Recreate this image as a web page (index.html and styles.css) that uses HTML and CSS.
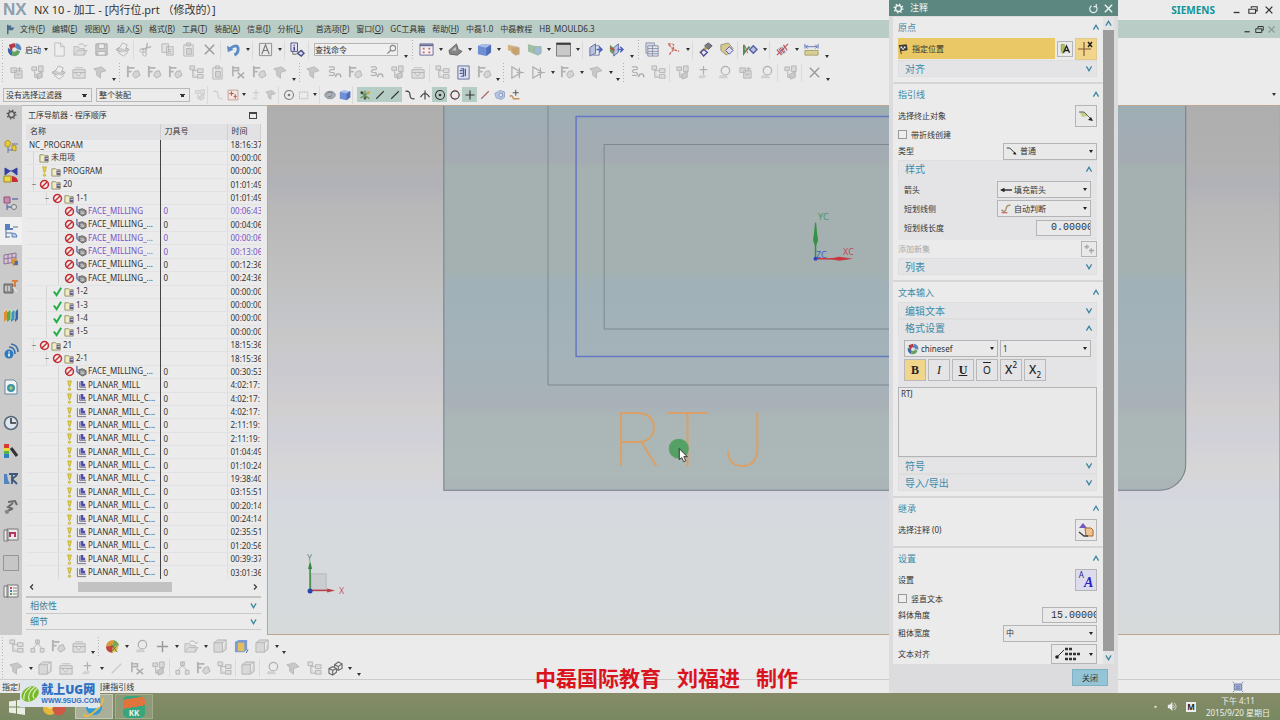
FILE: index.html
```html
<!DOCTYPE html>
<html lang="zh-CN">
<head>
<meta charset="utf-8">
<title>NX 10 - 加工</title>
<link rel="stylesheet" href="styles.css">
</head>
<body>
<svg class="defs" aria-hidden="true">
  <symbol id="up" viewBox="0 0 8 8"><path d="M1 6.500 4 1.500 7 6.500" fill="none" stroke="#3c86a0" stroke-width="1.400"/></symbol>
  <symbol id="down" viewBox="0 0 8 8"><path d="M1 1.500 4 6.500 7 1.500" fill="none" stroke="#3c86a0" stroke-width="1.400"/></symbol>
  <symbol id="gear" viewBox="0 0 16 16"><circle cx="8" cy="8" r="4.300" fill="none" stroke="currentColor" stroke-width="2"/><circle cx="8" cy="8" r="6.300" fill="none" stroke="currentColor" stroke-width="2" stroke-dasharray="2 2.950"/></symbol>
  <symbol id="nx" viewBox="0 0 16 16"><path d="M2 3 8 1l2 6-6 3z" fill="#b03a46"/><path d="M1 6l4 3 1 6Q0 13 1 6z" fill="#3b66a8"/><path d="M9 1q7 1 6 8L9 7z" fill="#5585bc"/><path d="M5 10l5-2 4 2q-2 6-8 5z" fill="#62a363"/><circle cx="8" cy="8" r="2.500" fill="#dfe6e8"/></symbol>
  <symbol id="page" viewBox="0 0 16 16"><path d="M3 1h6l4 4v10H3zM9 1v4h4" fill="#eee" stroke="#bdbdbd"/></symbol>
  <symbol id="open" viewBox="0 0 16 16"><path d="M1 14V5h5l1 2h5v7zM1 14l4-5h10l-3 5M6 3q4-3 7 2l2-2" fill="#ddd" stroke="#bbb"/></symbol>
  <symbol id="save" viewBox="0 0 16 16"><path d="M2 2h12v12H2z" fill="#c9c9c9" stroke="#a8a8a8"/><path d="M5 2h6v5H5zM4 10h8v4H4z" fill="#eee" stroke="#b0b0b0"/></symbol>
  <symbol id="print" viewBox="0 0 16 16"><path d="M1 8l7-4 7 4-6 5z" fill="#ccc" stroke="#aaa"/><path d="M5 6l3-5 5 2-2 5M3 11l6 4 5-4" fill="#eee" stroke="#b5b5b5"/></symbol>
  <symbol id="cut" viewBox="0 0 16 16"><path d="M9 1 7 11M13 5 3 8" stroke="#b3b3b3" stroke-width="1.500"/><circle cx="6" cy="13" r="2" fill="none" stroke="#b3b3b3"/><circle cx="3" cy="9" r="2" fill="none" stroke="#b3b3b3"/></symbol>
  <symbol id="copy" viewBox="0 0 16 16"><path d="M2 2h7v9H2zM7 5h7v9H7z" fill="#e2e2e2" stroke="#b5b5b5"/><path d="M9 8h3M9 10h3M9 12h3" stroke="#b5b5b5"/></symbol>
  <symbol id="paste" viewBox="0 0 16 16"><path d="M3 3h10v12H3z" fill="#e5e5e5" stroke="#b9b9b9"/><path d="M6 1h4v3H6zM6 7h5v6H6z" fill="#d5d5d5" stroke="#b3b3b3"/></symbol>
  <symbol id="x" viewBox="0 0 16 16"><path d="M3 3l10 10M13 3 3 13" stroke="#9a9a9a" stroke-width="1.500"/></symbol>
  <symbol id="undo" viewBox="0 0 16 16"><path d="M4 7Q13 1 13 8q0 4-4 6" fill="none" stroke="#5b8cc6" stroke-width="3"/><path d="M1 4l1 7 6-3z" fill="#5b8cc6"/></symbol>
  <symbol id="boxa" viewBox="0 0 16 16"><path d="M1.500 1.500h13v13h-13z" fill="#e9e9e9" stroke="#8d8d8d"/><path d="M4 13 8 3l4 10M6 9h5" fill="none" stroke="#777" stroke-width="1.200"/></symbol>
  <symbol id="info" viewBox="0 0 16 16"><path d="M1 1h7v9H1z" fill="#e6e6f4" stroke="#4c4c86"/><path d="M4.500 3v1M4.500 5v4" stroke="#3e3e88" stroke-width="1.600"/><path d="M8 12l4-3 3 3-3 3z" fill="#d9d9f0" stroke="#4c4c86" stroke-width="1.500"/><path d="M3 10v3h4" fill="none" stroke="#666"/></symbol>
  <symbol id="view" viewBox="0 0 16 16"><path d="M1 2h14v12H1z" fill="#f3eef0" stroke="#666a94"/><path d="M1 3.500h14" stroke="#666a94" stroke-width="2"/><path d="M4 7h2M10 7h2M4 11h2M10 11h2" stroke="#c46a6a" stroke-width="2"/></symbol>
  <symbol id="shade" viewBox="0 0 16 16"><path d="M1 9 9 2l2 6 4 2-5 4-8-1z" fill="#858585" stroke="#666"/><path d="M4 9l4-4 1 4z" fill="#c5c5c5"/></symbol>
  <symbol id="cube" viewBox="0 0 16 16"><path d="M1 4l5-2 9 1v8l-5 4-9-2z" fill="#6f8fd4"/><path d="M1 4l5-2 9 1-5 3z" fill="#a8bdea"/><path d="M10 6l5-3v8l-5 4z" fill="#4f6eb7"/></symbol>
  <symbol id="lay1" viewBox="0 0 16 16"><path d="M2 3l11 2v6L2 9z" fill="#d6b183"/><path d="M6 6h8v7l-4 1-4-3z" fill="#c9a06c" stroke="#bfae94"/></symbol>
  <symbol id="lay2" viewBox="0 0 16 16"><path d="M1 2l10 3v9L1 10z" fill="#9fc0a5"/><path d="M8 5h7v7l-4 2-3-3z" fill="#a3b9d6" stroke="#91b59e"/></symbol>
  <symbol id="win" viewBox="0 0 16 16"><path d="M.500 1h15v14H.500z" fill="#c9c9c9" stroke="#777"/><path d="M.500 2h15" stroke="#3a3a3a" stroke-width="2"/></symbol>
  <symbol id="door" viewBox="0 0 16 16"><path d="M2 6l6-4v10l-6 3z" fill="#b8c3de" stroke="#5e6ea2"/><path d="M8 4h4v10H5" fill="none" stroke="#6d7cae"/><path d="M9 8h5M12 5l3 3-3 3" fill="none" stroke="#4a5ec0" stroke-width="1.500"/></symbol>
  <symbol id="door2" viewBox="0 0 16 16"><path d="M1 3l4 3-1 7-3-3z" fill="#6a9c62"/><path d="M5 6l5-4v9l-5 4z" fill="#b8c3de" stroke="#5e6ea2"/><path d="M9 8h5M12 5l3 3-3 3" fill="none" stroke="#4a5ec0" stroke-width="1.500"/><path d="M1 6l5 3" stroke="#c04848" stroke-width="1.500"/></symbol>
  <symbol id="stack" viewBox="0 0 16 16"><path d="M1 1h9v11H1z" fill="#d9dce4" stroke="#8a90a6"/><path d="M3 4h11v11H3zM3 7h11M3 10h11M3 12.500h11M8 4v11" fill="#e4e6ee" stroke="#8a90a6"/></symbol>
  <symbol id="axes" viewBox="0 0 16 16"><path d="M3 3l5 5 6 2M8 8l-5 6M2 2h5M8 8V2" fill="none" stroke="#c76a5f" stroke-width="1.400" stroke-dasharray="3 1"/></symbol>
  <symbol id="tool" viewBox="0 0 16 16"><path d="M7 4l4-3 4 3-4 4z" fill="#7b7b8a" stroke="#555"/><path d="M2 12 9 6" stroke="#b4a35c" stroke-width="3"/><path d="M3 11l3-3 4 3-4 4z" fill="#e8e8f7" stroke="#4a4a9c" stroke-width="1.400"/></symbol>
  <symbol id="tool2" viewBox="0 0 16 16"><path d="M2 3l8-2 5 6-7 7-6-5z" fill="#d5c98e" stroke="#9a967f"/><path d="M7 9l4-4 4 4-4 4z" fill="#dadaf2" stroke="#5353a4"/></symbol>
  <symbol id="play" viewBox="0 0 16 16"><path d="M1 3v9l3-4 3-3" fill="none" stroke="#4f8f57" stroke-width="2"/><path d="M2 4l3 8" stroke="#c25757"/><path d="M7 8l4-4 4 4-4 4z" fill="#b9bede" stroke="#5560a4" stroke-width="1.500"/></symbol>
  <symbol id="slash" viewBox="0 0 16 16"><path d="M2 14 14 2M2 8l5 6M5 6l5 6M9 3l4 6" stroke="#c05a5a" stroke-width="1.300"/><path d="M4 7l4 6M7 5l4 6" stroke="#6c6cb5"/></symbol>
  <symbol id="meas" viewBox="0 0 16 16"><path d="M1 9h14v5H1z" fill="#d9cf94" stroke="#a99f6f"/><path d="M1 2v5M15 2v5M2 5h12M4 3 2 5l2 2M12 3l2 2-2 2" fill="none" stroke="#5b73b4"/></symbol>
  <symbol id="op" viewBox="0 0 16 16"><path d="M2 3h6v5H2zM6 6h8v8H6z" fill="#d6d6d6" stroke="#b8b8b8"/><path d="M11 2v5M9 4h5M8 10h4" stroke="#b0b0b0"/></symbol>
  <symbol id="op2" viewBox="0 0 16 16"><path d="M2 2h5v4H2zM9 1h5v6H9zM5 7v6h4" fill="#d8d8d8" stroke="#b4b4b4"/><path d="M7 10l6-3v6l-5 2z" fill="#cacaca" stroke="#b2b2b2"/></symbol>
  <symbol id="op3" viewBox="0 0 16 16"><path d="M2 1v12M2 3h7M2 7h4" stroke="#b2b2b2" stroke-width="2"/><path d="M9 7l4-1 2 5-5 3-3-3z" fill="#d5d5d5" stroke="#b2b2b2"/></symbol>
  <symbol id="op4" viewBox="0 0 16 16"><path d="M1 5h13v9H1zM1 8h13M4 8l3 4 3-4" fill="#ddd" stroke="#b4b4b4"/><path d="M3 3h9" stroke="#bbb"/></symbol>
  <symbol id="op5" viewBox="0 0 16 16"><path d="M1 4l8-2 5 4-6 2v6l-4-3V7z" fill="#c8c8c8" stroke="#b8b8b8"/></symbol>
  <symbol id="op6" viewBox="0 0 16 16"><path d="M2 1v11M2 3h6v3H2" fill="none" stroke="#b2b2b2" stroke-width="1.700"/><path d="M7 8l7 6M14 8l-7 6" stroke="#aaa" stroke-width="1.600"/></symbol>
  <symbol id="op7" viewBox="0 0 16 16"><path d="M2 2h5q2 2 0 3H4q-3 2 0 3h3q2 2 0 3H2" fill="none" stroke="#b2b2b2" stroke-width="1.300"/><path d="M9 13q1-5 5-3l1 3" fill="none" stroke="#aaa" stroke-width="1.500"/></symbol>
  <symbol id="op8" viewBox="0 0 16 16"><path d="M2 2l10 6-10 6zM10 3v11M7 8h8" fill="none" stroke="#b0b0b0" stroke-width="1.300"/></symbol>
  <symbol id="op9" viewBox="0 0 16 16"><path d="M8 1v9M4 5h8" stroke="#b0b0b0" stroke-width="1.300"/><path d="M4 11h7l-2 3H2z" fill="#d2d2d2"/></symbol>
  <symbol id="op10" viewBox="0 0 16 16"><circle cx="9" cy="6" r="4.500" fill="none" stroke="#b0b0b0" stroke-width="1.300"/><path d="M3 11h7l2 3H2z" fill="#d0d0d0"/></symbol>
  <symbol id="doc" viewBox="0 0 16 16"><path d="M2 1h12v14H2z" fill="#dde2f0" stroke="#5e6da0"/><path d="M5 4h3v8H5M10 4v8M4 6h3M4 9h3" fill="none" stroke="#4c5c98" stroke-width="1.300"/></symbol>
  <symbol id="plus" viewBox="0 0 16 16"><path d="M8 2v12M2 8h12" stroke="currentColor" stroke-width="1.500"/></symbol>
  <symbol id="line" viewBox="0 0 16 16"><path d="M3 13 13 3" stroke="currentColor" stroke-width="1.500"/></symbol>
  <symbol id="snap" viewBox="0 0 16 16"><path d="M2 4l12 9M14 4 2 12M8 2v12" stroke="#5d914c" stroke-width="1.500"/><circle cx="4" cy="5" r="2" fill="#444"/><circle cx="12" cy="5" r="2" fill="#c9a635"/><circle cx="8" cy="12" r="2" fill="#555"/></symbol>
  <symbol id="curve" viewBox="0 0 16 16"><path d="M2 3q6-1 6 5t6 5" fill="none" stroke="currentColor" stroke-width="1.500"/></symbol>
  <symbol id="join" viewBox="0 0 16 16"><path d="M2 11q6-10 12 0M8 2v12" fill="none" stroke="currentColor" stroke-width="1.400"/></symbol>
  <symbol id="cen" viewBox="0 0 16 16"><circle cx="8" cy="8" r="6" fill="none" stroke="#333" stroke-width="1.400"/><circle cx="8" cy="8" r="1.800" fill="#333"/></symbol>
  <symbol id="circ" viewBox="0 0 16 16"><circle cx="8" cy="8" r="5.500" fill="none" stroke="currentColor" stroke-width="1.400"/><path d="M8 1v3M8 12v3M1 8h3M12 8h3" stroke="#c56a6a" stroke-width="1.600"/></symbol>
  <symbol id="rect" viewBox="0 0 16 16"><path d="M2 4h11v9H2z" fill="none" stroke="#aaa" stroke-dasharray="2 1"/></symbol>
  <symbol id="disc" viewBox="0 0 16 16"><ellipse cx="8" cy="8" rx="7" ry="5" fill="#aab0b9" stroke="#7f8388"/><path d="M3 7q4-5 9-1M5 10q3 2 6-2" fill="none" stroke="#686d75"/></symbol>
  <symbol id="redb" viewBox="0 0 16 16"><path d="M1.500 1.500h13v13h-13z" fill="#f1e7e3" stroke="#b98c80"/><path d="M6 3v6M3 6h6M11 7v6M9 10h4" stroke="#cf5a48" stroke-width="1.500"/></symbol>
  <symbol id="part" viewBox="0 0 16 16"><path d="M1 6l7-4 6 2v7l-4 3-7-2z" fill="#b8c6e4" stroke="#8797bd"/><circle cx="9" cy="8" r="2.500" fill="#e3e8f3" stroke="#7487b3"/></symbol>
  <symbol id="pt" viewBox="0 0 16 16"><path d="M9 1v8M5 5h8" stroke="#555" stroke-width="1.300"/><path d="M1 10q3-3 5 3h8" fill="none" stroke="#c99058" stroke-width="2"/></symbol>
  <symbol id="wcube" viewBox="0 0 16 16"><path d="M1 4h9v10H1zM1 4l4-3h9l-4 3M14 1v10l-4 3" fill="#d8d8d8" stroke="#b5b5b5"/></symbol>
  <symbol id="tree1" viewBox="0 0 16 16"><path d="M1 1h5v4H1zM9 4h6v4H9zM9 10h6v4H9zM4 5v8h5M4 6h5" fill="#ddd" stroke="#b5b5b5"/></symbol>
  <symbol id="tree2" viewBox="0 0 16 16"><path d="M8 1v4M8 5l-5 5M8 5l5 5M1 10h4v4H1zM11 10h4v4h-4zM6 1h4v4H6z" fill="#ddd" stroke="#b5b5b5"/></symbol>
  <symbol id="color" viewBox="0 0 16 16"><path d="M1 8Q2 1 9 1l-1 7z" fill="#d79a3d"/><path d="M1 8q0 6 7 7l1-8z" fill="#c1443e"/><path d="M9 1q5 1 6 6l-7 2z" fill="#76a858"/><path d="M8 9l6-2q1 6-6 8z" fill="#e0c24c"/><path d="M7 6l6 8M12 8l-5 5" stroke="#4f7040"/></symbol>
  <symbol id="ybox" viewBox="0 0 16 16"><path d="M1 3l4-2h9v10l-3 3H1z" fill="#7d9bd2"/><path d="M4 4h7v9H4z" fill="#e2bf5c"/><path d="M13 15l2-4" stroke="#47639d"/></symbol>
  <symbol id="dcube" viewBox="0 0 16 16"><path d="M1 8l4-2 4 2v4l-4 3-4-2zM1 8l4 2 4-2M5 10v5M7 4l4-3 4 2v5l-4 2-4-3zM7 4l4 2 4-3M11 6v4" fill="none" stroke="#6d6d6d" stroke-width="1.200"/></symbol>
  <symbol id="lens" viewBox="0 0 16 16"><circle cx="10" cy="6" r="4" fill="none" stroke="#888" stroke-width="1.500"/><path d="M7 9l-5 5" stroke="#888" stroke-width="2"/></symbol>
  <symbol id="no" viewBox="0 0 12 12"><circle cx="6" cy="6" r="4.300" fill="#f7eded" stroke="#c22d33" stroke-width="1.700"/><path d="M3.200 8.800 8.800 3.200" stroke="#c22d33" stroke-width="1.600"/></symbol>
  <symbol id="ok" viewBox="0 0 12 12"><path d="M2 6l3 4L10 2" fill="none" stroke="#24ae47" stroke-width="2.200"/></symbol>
  <symbol id="ex" viewBox="0 0 12 12"><path d="M4 1h4l-1.500 6h-1z" fill="#ecd83c" stroke="#b5a22c" stroke-width=".800"/><circle cx="6" cy="10" r="1.300" fill="#ecd83c" stroke="#b5a22c" stroke-width=".700"/></symbol>
  <symbol id="fold" viewBox="0 0 12 12"><path d="M1 3h4l1 1h4v7H1z" fill="#f1edc0" stroke="#918d68"/><path d="M6 5h4v5H6z" fill="#66618c"/><path d="M7 7h3" stroke="#d4cfe8"/></symbol>
  <symbol id="face" viewBox="0 0 12 12"><path d="M1 0v6l3 3" fill="none" stroke="#6670a5" stroke-width="1.500"/><path d="M3 4l4-1 4 2v4l-4 2-3-2z" fill="#8d8d8d" stroke="#5e5e5e"/><path d="M5 6l4 1M5 8h4" stroke="#d3d3d3"/></symbol>
  <symbol id="plan" viewBox="0 0 12 12"><path d="M1.500 1v9.500H11M4 2v6h7" fill="none" stroke="#6f6f80"/><path d="M5 1h3v3h2v3H5z" fill="#5350a8"/></symbol>
  <symbol id="r1" viewBox="0 0 16 16"><path d="M2 3l3-2 3 3-2 4-4-1zM9 6l4 1v5l-4-1z" fill="#e9c93c" stroke="#b19626"/><path d="M5 8v6M5 11h5M9 5h6" stroke="#6076a8"/></symbol>
  <symbol id="r2" viewBox="0 0 16 16"><path d="M2 1v7l5-4zM14 1v7L9 4zM7 4h2" fill="#3441a3" stroke="#3441a3"/><path d="M1 9h7v6H1z" fill="#ecd84b" stroke="#9b8b24"/><path d="M9 9q6 1 6 6H9z" fill="#c72f35"/></symbol>
  <symbol id="r3" viewBox="0 0 16 16"><path d="M1 2h6v6H1z" fill="#c88aab" stroke="#90527a"/><path d="M9 4h6M4 9v6M4 12h4" stroke="#6576a5" stroke-width="1.300"/><circle cx="11" cy="12" r="2.500" fill="#ddd" stroke="#777"/></symbol>
  <symbol id="r4" viewBox="0 0 16 16"><path d="M2 1h5v4h3v2H2z" fill="#5682c2"/><path d="M3 7v8M3 10h6M3 14h4M10 4h5" stroke="#56749f"/><path d="M9 10l4 1 1 3H9z" fill="#b8cde9" stroke="#5d86bf"/></symbol>
  <symbol id="r5" viewBox="0 0 16 16"><path d="M1 4l12-2v9L1 13zM1 8l12-2M5 3v9M9 3v9" fill="#d7c5cf" stroke="#8d719e"/><path d="M8 9l4-2 3 3v4l-5 1z" fill="#d99438"/><path d="M12 10h3v4h-4z" fill="#4770b6"/></symbol>
  <symbol id="r6" viewBox="0 0 16 16"><path d="M1 5h9v9H1z" fill="#8e8e8e" stroke="#666"/><path d="M3 7v5M6 7v5M10 8l4 5" stroke="#e4e4e4" stroke-width="1.300"/><path d="M9 2h6M12 2v6" stroke="#dd8142" stroke-width="2"/></symbol>
  <symbol id="r7" viewBox="0 0 16 16"><path d="M1 5l3-3v10l-3 3z" fill="#dc9232"/><path d="M4 5l4-3v10l-4 3z" fill="#58a94e"/><path d="M8 5l4-3v10l-4 3z" fill="#4292c2"/><path d="M12 5l3-3v10l-3 3z" fill="#3665aa"/><path d="M1 5l3-3M4 5l4-3v10M8 5l4-3v10" fill="none" stroke="#e6e6dc" stroke-width=".800"/></symbol>
  <symbol id="r8" viewBox="0 0 16 16"><circle cx="6" cy="11" r="4.500" fill="#2d7ac0"/><path d="M6 8.500v1M6 10.500v3" stroke="#fff" stroke-width="1.600"/><path d="M6 4q6 0 6 7M8 1q7 1 7 8" fill="none" stroke="#3a6fa9" stroke-width="1.500"/></symbol>
  <symbol id="r9" viewBox="0 0 16 16"><path d="M2 1h9l3 3v11H2z" fill="#f4f4f4" stroke="#6689a1"/><circle cx="8" cy="9" r="4" fill="#3f94a7"/><circle cx="8" cy="9" r="1.700" fill="#a7d56c"/></symbol>
  <symbol id="r10" viewBox="0 0 16 16"><circle cx="8" cy="8" r="6.500" fill="#dce6f0" stroke="#5b6877" stroke-width="1.600"/><path d="M8 3v5h5" fill="none" stroke="#333" stroke-width="1.500"/></symbol>
  <symbol id="r11" viewBox="0 0 16 16"><path d="M1 1h5v4H1z" fill="#d73b2f"/><path d="M1 5h5v3H1z" fill="#ecd93a"/><path d="M1 8h5v3H1z" fill="#54b34a"/><path d="M1 11h5v4H1z" fill="#337fc4"/><path d="M8 5l6 8" stroke="#333" stroke-width="3"/></symbol>
  <symbol id="r12" viewBox="0 0 16 16"><path d="M1 3h3l1 6 2 4H1z" fill="#4f86c2"/><path d="M6 3h9M9 3v10M14 4l-5 4 5 5" fill="none" stroke="#3e587a" stroke-width="1.800"/></symbol>
  <symbol id="r13" viewBox="0 0 16 16"><path d="M5 3l7-1 2 4M10 4 5 8l5 2M2 13l7-3" fill="none" stroke="#6c6c6c" stroke-width="2"/><circle cx="4" cy="13" r="2" fill="#888"/></symbol>
  <symbol id="r14" viewBox="0 0 16 16"><path d="M1 3h4v11H1zM4 2h11v11H4z" fill="#ecebec" stroke="#777"/><path d="M6 10V5h7v5h-2V7H8v3z" fill="#b7365b"/></symbol>
  <symbol id="r15" viewBox="0 0 16 16"><path d="M.500 .500h15v15H.500z" fill="#c6c6c6" stroke="#969696"/></symbol>
  <symbol id="r16" viewBox="0 0 16 16"><path d="M1 3h4v11H1zM4 2h11v12H4z" fill="#eee" stroke="#777"/><path d="M7 5h2" stroke="#c24f4f" stroke-width="2"/><path d="M7 8h2" stroke="#4a76b9" stroke-width="2"/><path d="M7 11h2" stroke="#58a94e" stroke-width="2"/><path d="M10 5h4M10 8h4M10 11h4" stroke="#888"/></symbol>
  <symbol id="mini" viewBox="0 0 12 12"><path d="M2 9h7" stroke="currentColor" stroke-width="1.600"/></symbol>
  <symbol id="rest" viewBox="0 0 12 12"><path d="M4 4V2h7v5H9M1 5h8v5H1z" fill="none" stroke="currentColor" stroke-width="1.300"/></symbol>
  <symbol id="close" viewBox="0 0 12 12"><path d="M2 2l8 8M10 2l-8 8" stroke="currentColor" stroke-width="1.500"/></symbol>
  <symbol id="lead" viewBox="0 0 16 16"><path d="M1 4h4l7 7" fill="none" stroke="#333" stroke-width="1.300"/><path d="M14 13l-5-1 3-3z" fill="#222"/></symbol>
</svg>

<header class="titlebar">
  <span class="nxlogo">NX</span>
  <h1>NX 10 - 加工 - [内行位.prt （修改的）]</h1>
  <span class="siemens">SIEMENS</span>
  <div class="winbtns">
    <button aria-label="最小化"><svg><use href="#mini"/></svg></button><button aria-label="还原"><svg><use href="#rest"/></svg></button><button aria-label="关闭"><svg><use href="#close"/></svg></button>
  </div>
</header>

<nav class="menubar">
  <svg class="menuicon" viewBox="0 0 16 16"><path d="M4 1v14" stroke="#4a5f78" stroke-width="2"/><path d="M4 2h5v3h5l-3 4H4z" fill="#4e6d92"/></svg>
  <button>文件(<u>F</u>)</button><button>编辑(<u>E</u>)</button><button>视图(<u>V</u>)</button><button>插入(<u>S</u>)</button><button>格式(<u>R</u>)</button><button>工具(<u>T</u>)</button><button>装配(<u>A</u>)</button><button>信息(<u>I</u>)</button><button>分析(<u>L</u>)</button><button class="wide">首选项(<u>P</u>)</button><button>窗口(<u>O</u>)</button><button>GC工具箱</button><button>帮助(<u>H</u>)</button><button>中磊1.0</button><button>中磊教程</button><button>HB_MOULD6.3</button>
  <div class="winbtns docbtns">
    <button aria-label="最小化文档"><svg><use href="#mini"/></svg></button><button aria-label="还原文档"><svg><use href="#rest"/></svg></button><button class="dim" aria-label="关闭文档"><svg><use href="#close"/></svg></button>
  </div>
</nav>

<div class="toolbar">
  <i class="grip"></i>
  <button class="launch"><svg><use href="#nx"/></svg>启动<i class="caret"></i></button>
  <button class="b"><svg><use href="#page"/></svg></button><button class="b"><svg><use href="#open"/></svg></button><button class="b"><svg><use href="#save"/></svg></button><button class="b"><svg><use href="#print"/></svg></button><i class="sep"></i>
  <button class="b"><svg><use href="#cut"/></svg></button><button class="b"><svg><use href="#copy"/></svg></button><button class="b"><svg><use href="#paste"/></svg></button><button class="b"><svg><use href="#x"/></svg></button><i class="sep"></i>
  <button class="b"><svg><use href="#undo"/></svg></button><i class="dd"></i><i class="sep"></i>
  <button class="b"><svg><use href="#boxa"/></svg></button><i class="dd"></i><i class="sep"></i>
  <button class="b"><svg><use href="#info"/></svg></button><i class="sep"></i>
  <label class="search"><input type="text" value="查找命令" aria-label="查找命令"><svg><use href="#lens"/></svg></label><i class="dd end"></i>
  <i class="grip"></i>
  <button class="b"><svg><use href="#view"/></svg></button><i class="dd"></i><button class="b"><svg><use href="#shade"/></svg></button><i class="dd"></i><button class="b"><svg><use href="#cube"/></svg></button><i class="dd"></i><button class="b"><svg><use href="#lay1"/></svg></button><button class="b"><svg><use href="#lay2"/></svg></button><i class="dd"></i><button class="b"><svg><use href="#win"/></svg></button><i class="dd"></i><i class="sep"></i>
  <button class="b"><svg><use href="#door"/></svg></button><button class="b"><svg><use href="#door2"/></svg></button><i class="dd end"></i>
  <i class="grip"></i>
  <button class="b"><svg><use href="#stack"/></svg></button><button class="b"><svg><use href="#axes"/></svg></button><i class="dd"></i><i class="sep"></i>
  <button class="b"><svg><use href="#tool"/></svg></button><button class="b"><svg><use href="#tool2"/></svg></button><i class="sep"></i>
  <button class="b"><svg><use href="#play"/></svg></button><i class="dd"></i><i class="sep"></i>
  <button class="b"><svg><use href="#slash"/></svg></button><i class="dd"></i><button class="b"><svg><use href="#meas"/></svg></button><i class="dd end"></i>
</div>

<div class="toolbar tight">
  <i class="grip"></i>
  <button class="b"><svg><use href="#op"/></svg></button><button class="b"><svg><use href="#op2"/></svg></button><button class="b"><svg><use href="#print"/></svg></button><button class="b"><svg><use href="#op4"/></svg></button><button class="b"><svg><use href="#op5"/></svg></button><i class="dd end"></i>
  <i class="grip"></i>
  <button class="b"><svg><use href="#op3"/></svg></button><button class="b"><svg><use href="#op3"/></svg></button><button class="b"><svg><use href="#op3"/></svg></button><button class="b"><svg><use href="#tree1"/></svg></button><button class="b"><svg><use href="#paste"/></svg></button><button class="b"><svg><use href="#op6"/></svg></button><button class="b"><svg><use href="#op3"/></svg></button><button class="b"><svg><use href="#op5"/></svg></button><i class="dd end"></i>
  <i class="grip"></i>
  <button class="b"><svg><use href="#op5"/></svg></button><button class="b"><svg><use href="#op7"/></svg></button><button class="b"><svg><use href="#op3"/></svg></button><button class="b"><svg><use href="#op7"/></svg></button><button class="b"><svg><use href="#op2"/></svg></button><button class="b"><svg><use href="#op4"/></svg></button><i class="sep"></i>
  <button class="b"><svg><use href="#tree1"/></svg></button><button class="b"><svg><use href="#doc"/></svg></button><button class="b"><svg><use href="#op3"/></svg></button><i class="dd end"></i>
  <i class="grip"></i>
  <button class="b"><svg><use href="#op8"/></svg></button><button class="b"><svg><use href="#op8"/></svg></button><i class="dd"></i><button class="b"><svg><use href="#op3"/></svg></button><i class="dd"></i><button class="b"><svg><use href="#op5"/></svg></button><i class="dd"></i><i class="dd end"></i>
  <i class="grip"></i>
  <button class="b"><svg><use href="#op7"/></svg></button><button class="b"><svg><use href="#tree1"/></svg></button><i class="sep"></i>
  <button class="b"><svg><use href="#op2"/></svg></button><button class="b"><svg><use href="#op9"/></svg></button><button class="b"><svg><use href="#op10"/></svg></button><button class="b"><svg><use href="#op"/></svg></button><button class="b"><svg><use href="#op10"/></svg></button><i class="sep"></i>
  <button class="b"><svg><use href="#op2"/></svg></button><i class="sep"></i><button class="b"><svg><use href="#x"/></svg></button><i class="dd end"></i>
</div>

<div class="toolbar filters">
  <select class="filter" aria-label="选择过滤器"><option>没有选择过滤器</option></select>
  <select class="filter scope" aria-label="选择范围"><option>整个装配</option></select>
  <button class="n gray"><svg><use href="#op2"/></svg></button><i class="sep"></i><button class="n gray"><svg><use href="#curve"/></svg></button><button class="n"><svg><use href="#redb"/></svg></button><i class="dd"></i><button class="n gray"><svg><use href="#op9"/></svg></button><button class="n"><svg><use href="#op5"/></svg></button><i class="sep"></i>
  <button class="n"><svg class="gray"><use href="#cen"/></svg></button><button class="n"><svg><use href="#rect"/></svg></button><i class="dd"></i><i class="sep"></i>
  <button class="n"><svg><use href="#disc"/></svg></button><button class="n"><svg><use href="#cube"/></svg></button><i class="sep snaps"></i>
  <button class="n on"><svg><use href="#snap"/></svg></button><button class="n on"><svg><use href="#line"/></svg></button><button class="n on"><svg><use href="#line"/></svg></button><button class="n"><svg><use href="#curve"/></svg></button><button class="n"><svg><use href="#join"/></svg></button><button class="n on"><svg><use href="#cen"/></svg></button><button class="n"><svg><use href="#circ"/></svg></button><button class="n on"><svg><use href="#plus"/></svg></button><button class="n red"><svg><use href="#line"/></svg></button><button class="n"><svg><use href="#part"/></svg></button><button class="n"><svg><use href="#pt"/></svg></button>
  <i class="dd more"></i>
</div>

<main>
  <aside class="rail">
    <button class="cog"><svg><use href="#gear"/></svg></button>
    <button><svg><use href="#r1"/></svg></button><button><svg><use href="#r2"/></svg></button><button><svg><use href="#r3"/></svg></button><button class="sel"><svg><use href="#r4"/></svg></button><button><svg><use href="#r5"/></svg></button><button><svg><use href="#r6"/></svg></button><button><svg><use href="#r7"/></svg></button><button class="gap"><svg><use href="#r8"/></svg></button><button class="gap"><svg><use href="#r9"/></svg></button><button class="gap"><svg><use href="#r10"/></svg></button><button><svg><use href="#r11"/></svg></button><button><svg><use href="#r12"/></svg></button><button><svg><use href="#r13"/></svg></button><button><svg><use href="#r14"/></svg></button><button><svg><use href="#r15"/></svg></button><button><svg><use href="#r16"/></svg></button>
  </aside>

  <section class="navigator">
    <div class="navtitle"><h2>工序导航器 - 程序顺序</h2><button class="maxi" aria-label="最大化"></button></div>
    <div class="treewrap">
    <table class="tree">
      <thead><tr><th class="c1">名称</th><th class="c2">刀具号</th><th class="c3">时间</th></tr></thead>
      <tbody>
      <tr><td class="l0">NC_PROGRAM</td><td></td><td>18:16:37</td></tr>
      <tr><td class="l1"><i></i><svg><use href="#fold"/></svg>未用项</td><td></td><td>00:00:00</td></tr>
      <tr><td class="l1"><i></i><svg><use href="#ex"/></svg><svg><use href="#fold"/></svg>PROGRAM</td><td></td><td>00:00:00</td></tr>
      <tr><td class="l1"><i>−</i><svg><use href="#no"/></svg><svg><use href="#fold"/></svg>20</td><td></td><td>01:01:49</td></tr>
      <tr><td class="l2"><i>−</i><svg><use href="#no"/></svg><svg><use href="#fold"/></svg>1-1</td><td></td><td>01:01:49</td></tr>
      <tr class="hot"><td class="l3"><i></i><svg><use href="#no"/></svg><svg><use href="#face"/></svg>FACE_MILLING</td><td>0</td><td>00:06:43</td></tr>
      <tr><td class="l3"><i></i><svg><use href="#no"/></svg><svg><use href="#face"/></svg>FACE_MILLING_...</td><td>0</td><td>00:04:06</td></tr>
      <tr class="hot"><td class="l3"><i></i><svg><use href="#no"/></svg><svg><use href="#face"/></svg>FACE_MILLING_...</td><td>0</td><td>00:00:06</td></tr>
      <tr class="hot"><td class="l3"><i></i><svg><use href="#no"/></svg><svg><use href="#face"/></svg>FACE_MILLING_...</td><td>0</td><td>00:13:06</td></tr>
      <tr><td class="l3"><i></i><svg><use href="#no"/></svg><svg><use href="#face"/></svg>FACE_MILLING_...</td><td>0</td><td>00:12:36</td></tr>
      <tr><td class="l3"><i></i><svg><use href="#no"/></svg><svg><use href="#face"/></svg>FACE_MILLING_...</td><td>0</td><td>00:24:36</td></tr>
      <tr><td class="l2"><i></i><svg><use href="#ok"/></svg><svg><use href="#fold"/></svg>1-2</td><td></td><td>00:00:00</td></tr>
      <tr><td class="l2"><i></i><svg><use href="#ok"/></svg><svg><use href="#fold"/></svg>1-3</td><td></td><td>00:00:00</td></tr>
      <tr><td class="l2"><i></i><svg><use href="#ok"/></svg><svg><use href="#fold"/></svg>1-4</td><td></td><td>00:00:00</td></tr>
      <tr><td class="l2"><i></i><svg><use href="#ok"/></svg><svg><use href="#fold"/></svg>1-5</td><td></td><td>00:00:00</td></tr>
      <tr><td class="l1"><i>−</i><svg><use href="#no"/></svg><svg><use href="#fold"/></svg>21</td><td></td><td>18:15:36</td></tr>
      <tr><td class="l2"><i>−</i><svg><use href="#no"/></svg><svg><use href="#fold"/></svg>2-1</td><td></td><td>18:15:36</td></tr>
      <tr><td class="l3"><i></i><svg><use href="#no"/></svg><svg><use href="#face"/></svg>FACE_MILLING_...</td><td>0</td><td>00:30:53</td></tr>
      <tr><td class="l3"><i></i><svg><use href="#ex"/></svg><svg><use href="#plan"/></svg>PLANAR_MILL</td><td>0</td><td>4:02:17:</td></tr>
      <tr><td class="l3"><i></i><svg><use href="#ex"/></svg><svg><use href="#plan"/></svg>PLANAR_MILL_C...</td><td>0</td><td>4:02:17:</td></tr>
      <tr><td class="l3"><i></i><svg><use href="#ex"/></svg><svg><use href="#plan"/></svg>PLANAR_MILL_C...</td><td>0</td><td>4:02:17:</td></tr>
      <tr><td class="l3"><i></i><svg><use href="#ex"/></svg><svg><use href="#plan"/></svg>PLANAR_MILL_C...</td><td>0</td><td>2:11:19:</td></tr>
      <tr><td class="l3"><i></i><svg><use href="#ex"/></svg><svg><use href="#plan"/></svg>PLANAR_MILL_C...</td><td>0</td><td>2:11:19:</td></tr>
      <tr><td class="l3"><i></i><svg><use href="#ex"/></svg><svg><use href="#plan"/></svg>PLANAR_MILL_C...</td><td>0</td><td>01:04:49</td></tr>
      <tr><td class="l3"><i></i><svg><use href="#ex"/></svg><svg><use href="#plan"/></svg>PLANAR_MILL_C...</td><td>0</td><td>01:10:24</td></tr>
      <tr><td class="l3"><i></i><svg><use href="#ex"/></svg><svg><use href="#plan"/></svg>PLANAR_MILL_C...</td><td>0</td><td>19:38:40</td></tr>
      <tr><td class="l3"><i></i><svg><use href="#ex"/></svg><svg><use href="#plan"/></svg>PLANAR_MILL_C...</td><td>0</td><td>03:15:51</td></tr>
      <tr><td class="l3"><i></i><svg><use href="#ex"/></svg><svg><use href="#plan"/></svg>PLANAR_MILL_C...</td><td>0</td><td>00:20:14</td></tr>
      <tr><td class="l3"><i></i><svg><use href="#ex"/></svg><svg><use href="#plan"/></svg>PLANAR_MILL_C...</td><td>0</td><td>00:24:14</td></tr>
      <tr><td class="l3"><i></i><svg><use href="#ex"/></svg><svg><use href="#plan"/></svg>PLANAR_MILL_C...</td><td>0</td><td>02:35:51</td></tr>
      <tr><td class="l3"><i></i><svg><use href="#ex"/></svg><svg><use href="#plan"/></svg>PLANAR_MILL_C...</td><td>0</td><td>01:20:56</td></tr>
      <tr><td class="l3"><i></i><svg><use href="#ex"/></svg><svg><use href="#plan"/></svg>PLANAR_MILL_C...</td><td>0</td><td>00:39:37</td></tr>
      <tr><td class="l3"><i></i><svg><use href="#ex"/></svg><svg><use href="#plan"/></svg>PLANAR_MILL_C...</td><td>0</td><td>03:01:36</td></tr>
      </tbody>
    </table>
    </div>
    <div class="hscroll">
      <svg viewBox="0 0 8 8"><path d="M5 1.500 2.500 4 5 6.500" fill="none" stroke="#333" stroke-width="1.200"/></svg>
      <span class="track"><span class="thumb"></span></span>
      <svg viewBox="0 0 8 8"><path d="M3 1.500 5.500 4 3 6.500" fill="none" stroke="#333" stroke-width="1.200"/></svg>
    </div>
    <button class="fold">相依性<svg><use href="#down"/></svg></button>
    <button class="fold">细节<svg><use href="#down"/></svg></button>
  </section>

  <section class="viewport">
    <svg class="scene" viewBox="1 1 1011 527" preserveAspectRatio="xMinYMin slice">
      <defs>
        <linearGradient id="bg" x1="0" y1="0" x2="0" y2="1">
          <stop offset="0" stop-color="#aeaeae"/><stop offset=".11" stop-color="#b2b1b2"/><stop offset=".15" stop-color="#b1b2b8"/><stop offset=".2" stop-color="#b9b8b8"/><stop offset=".33" stop-color="#c1c1c1"/><stop offset=".4" stop-color="#c3c5c9"/><stop offset=".44" stop-color="#c9c8c8"/><stop offset=".5" stop-color="#cac9d0"/><stop offset=".57" stop-color="#d1cfcf"/><stop offset=".62" stop-color="#d0d1d9"/><stop offset=".68" stop-color="#d7d6d6"/><stop offset=".73" stop-color="#d5d6df"/><stop offset=".76" stop-color="#d6dade"/><stop offset="1" stop-color="#d7dadb"/>
        </linearGradient>
        <linearGradient id="solid" x1="0" y1="0" x2="0" y2="1">
          <stop offset="0" stop-color="#9cafb3"/><stop offset=".07" stop-color="#a2acb4"/><stop offset=".14" stop-color="#a4abb2"/><stop offset=".17" stop-color="#a4b1b0"/><stop offset=".43" stop-color="#a4b1b0"/><stop offset=".47" stop-color="#a0b1b8"/><stop offset=".7" stop-color="#a5b3b9"/><stop offset=".77" stop-color="#a9b0b8"/><stop offset=".82" stop-color="#abb7b7"/><stop offset=".96" stop-color="#acb7b7"/><stop offset="1" stop-color="#aab3b8"/>
        </linearGradient>
      </defs>
      <rect width="1014" height="530" fill="url(#bg)"/>
      <path d="M176.500 -2V384.500H891a26 26 0 0 0 26-26V-2z" fill="url(#solid)" stroke="#747f84"/>
      <path d="M280.500 0V279.500H700M700 39.500H336.500V223.500H700" fill="none" stroke="#7c8a90"/>
      <path d="M700 11.500H308.500V251H700" fill="none" stroke="#6478c4" stroke-width="1.500"/>
      <path d="M547.500 153V118" stroke="#379047" stroke-width="1.500"/><path d="M545 135l2.500-19 2.500 19-2.500 7z" fill="#379047"/>
      <path d="M548 153.500h30" stroke="#c9383e" stroke-width="1.500"/><path d="M561 153.500l10-2 14 2-14 2z" fill="#c9383e"/>
      <circle cx="547.500" cy="153.500" r="2" fill="#2746c2"/>
      <text class="axis" x="550" y="115" fill="#4b9460">YC</text><text class="axis" x="548" y="153" fill="#3f5cc4">ZC</text><text class="axis" x="575" y="150" fill="#c14c5c">XC</text>
      <text class="cad" x="345" y="360">R</text><text class="cad" x="397" y="360">T</text><text class="cad" x="456" y="360">J</text>
      <circle cx="411" cy="343" r="10" fill="#55a065"/>
      <path d="M411.500 343v11l2.500-2 2 4 2-1-2-4h3.500z" fill="#fff" stroke="#222" stroke-width=".900"/>
      <rect x="44" y="468" width="15" height="16" fill="#cccdd0" stroke="#b7b9bc"/>
      <path d="M43 484v-22" stroke="#37843c" stroke-width="1.500"/><path d="M41 463l2-8 2 8z" fill="#37843c"/>
      <path d="M43 484.500h18" stroke="#bb3f42" stroke-width="1.500"/><path d="M60 482.500l8 2-8 2z" fill="#bb3f42"/><circle cx="43" cy="485" r="2.500" fill="#2845ad"/>
      <text class="axis" x="40" y="455" fill="#788">Y</text><text class="axis" x="72" y="488" fill="#c45f6b">X</text>
    </svg>
  </section>
</main>

<footer class="bottom">
  <div class="toolbar tight">
    <i class="grip"></i>
    <button class="b"><svg><use href="#tree1"/></svg></button><button class="b"><svg><use href="#tree2"/></svg></button><button class="b"><svg><use href="#op3"/></svg></button><button class="b"><svg><use href="#op4"/></svg></button><i class="dd end"></i>
    <i class="grip"></i>
    <button class="b"><svg><use href="#color"/></svg></button><i class="dd"></i><button class="b"><svg><use href="#op10"/></svg></button><button class="b"><svg class="mid"><use href="#plus"/></svg></button><i class="dd"></i><button class="b"><svg><use href="#open"/></svg></button><i class="dd"></i><button class="b"><svg><use href="#wcube"/></svg></button><button class="b"><svg><use href="#ybox"/></svg></button><button class="b"><svg><use href="#wcube"/></svg></button><i class="dd"></i><i class="dd end"></i>
  </div>
  <div class="toolbar">
    <i class="grip"></i>
    <button class="b"><svg><use href="#op5"/></svg></button><i class="dd"></i><button class="b"><svg><use href="#wcube"/></svg></button><button class="b"><svg><use href="#op4"/></svg></button><button class="b"><svg><use href="#op9"/></svg></button><i class="dd"></i><button class="b gray"><svg><use href="#line"/></svg></button><button class="b"><svg><use href="#op6"/></svg></button><button class="b"><svg><use href="#op2"/></svg></button><i class="sep"></i>
    <button class="b"><svg><use href="#tree2"/></svg></button><button class="b"><svg><use href="#op3"/></svg></button><button class="b"><svg><use href="#tree1"/></svg></button><i class="sep"></i><button class="b"><svg><use href="#wcube"/></svg></button><i class="sep"></i><button class="b"><svg><use href="#op10"/></svg></button><button class="b"><svg><use href="#op5"/></svg></button><button class="b"><svg><use href="#tree1"/></svg></button><button class="b"><svg><use href="#dcube"/></svg></button><i class="dd"></i><i class="dd end"></i>
  </div>
  <div class="status"><span>指定原点, 或按住并拖动以创建指引线</span><svg viewBox="0 0 16 16"><path d="M3 4h10v8H3z" fill="#aab5d8" stroke="#5a6599"/><path d="M5 7h6M5 9.500h6M1 1l2 2M15 1l-2 2M1 15l2-2M15 15l-2-2" stroke="#5a6599"/></svg></div>
</footer>

<div class="taskbar">
  <button class="start" aria-label="开始"><svg viewBox="0 0 18 18"><path d="M1 3.500 8 2.500v6H1zM9 2.300 17 1v7.500H9zM1 9.500h7v6l-7-1zM9 9.500h8V17l-8-1.300z" fill="#e9ece2"/></svg></button>
  <button class="task" aria-label="应用"><svg viewBox="0 0 24 24"><circle cx="8" cy="13" r="7" fill="#e8b63a"/><circle cx="17" cy="14" r="6.500" fill="#cf5845"/><circle cx="8" cy="11" r="3" fill="#f4d772"/></svg></button>
  <button class="task open" aria-label="浏览器"><svg viewBox="0 0 24 24"><circle cx="12" cy="12" r="8" fill="#2f9bd6"/><path d="M6 12h12" stroke="#d5edf8" stroke-width="2.500"/><path d="M2 19Q3 24 12 17T21 3" fill="none" stroke="#e6b94a" stroke-width="2"/></svg></button>
  <button class="task kk"><span>KK</span></button>
  <div class="tray">
    <svg viewBox="0 0 12 12"><path d="M4 7l2-2 2 2z" fill="#eee"/></svg>
    <svg viewBox="0 0 12 12"><path d="M2 4h2l3-3v10L4 8H2z" fill="#eee"/><path d="M8 4q2 2 0 4M9 2q4 4 0 8" fill="none" stroke="#ddd"/></svg>
    <span class="ime">M</span>
    <div class="clock"><span>下午 4:11</span><span>2015/9/20 星期日</span></div>
  </div>
</div>

<div class="caption"><span>中磊国际教育</span><span>刘福进</span><span>制作</span></div>
<div class="mark">
  <svg viewBox="0 0 26 26"><ellipse cx="13" cy="13" rx="12" ry="9" fill="#78b82c" transform="rotate(-35 13 13)"/><path d="M5 20Q4 10 14 4M12 22Q8 12 19 4M18 19Q14 13 22 6" fill="none" stroke="#d9efb4" stroke-width="1.600"/></svg>
  <div><b>就上UG网</b><small>WWW.9SUG.COM</small></div>
</div>

<form class="dialog" aria-label="注释">
  <div class="dlghead"><svg><use href="#gear"/></svg><h2>注释</h2><button type="button" aria-label="重置"><svg viewBox="0 0 12 12"><path d="M4 3a4 4 0 1 0 5 1M9 1v3H6" fill="none" stroke="#e8efed" stroke-width="1.300"/></svg></button><button type="button" aria-label="关闭对话框"><svg><use href="#close"/></svg></button></div>
  <div class="dlgbody">
    <div class="fields">
      <section>
        <h3>原点<svg><use href="#up"/></svg></h3>
        <div class="row big"><div class="active"><svg viewBox="0 0 12 12"><path d="M1 2l9-1 1 6-8 1 1 4" fill="#444" stroke="#222"/><path d="M3 3h2v2H3zM7 3h2v2H7zM5 5h2v2H5z" fill="#eee"/></svg>指定位置</div>
          <button type="button" class="ib small" aria-label="注释放置"><svg viewBox="0 0 16 16"><path d="M3 2h4v9l-2 3-2-3z" fill="#b8c15a" stroke="#8b9340"/><path d="M6 13l4-9 4 9M8 10h5" fill="none" stroke="#222" stroke-width="1.800"/></svg></button>
          <button type="button" class="ib lit" aria-label="点"><svg viewBox="0 0 16 16"><path d="M6 1v14M0 8h13" stroke="#8a5a35" stroke-width="1.200"/><path d="M10 1l4 5M14 1l-4 5" stroke="#222" stroke-width="1.500"/></svg></button></div>
        <h4>对齐<svg><use href="#down"/></svg></h4>
      </section>
      <section>
        <h3>指引线<svg><use href="#up"/></svg></h3>
        <div class="row big"><span>选择终止对象</span><button type="button" class="ib" aria-label="选择终止对象"><svg viewBox="0 0 16 16"><path d="M2 4q6-1 8 4l-6 1z" fill="#c3ce8b"/><path d="M1 4h5l7 7" fill="none" stroke="#666"/><path d="M15 13l-5-1 3-3z" fill="#222"/></svg></button></div>
        <label class="row check"><input type="checkbox">带折线创建</label>
        <div class="row"><label for="type">类型</label><span class="combo w94"><svg><use href="#lead"/></svg><select id="type"><option>普通</option></select></span></div>
        <div class="sub">
          <h4>样式<svg><use href="#up"/></svg></h4>
          <div class="row"><label for="arrow">箭头</label><span class="combo w94"><svg viewBox="0 0 16 16"><path d="M3 8h13" stroke="#222" stroke-width="1.800"/><path d="M0 8l6-3v6z" fill="#222"/></svg><select id="arrow"><option>填充箭头</option></select></span></div>
          <div class="row"><label for="side">短划线侧</label><span class="combo w94"><svg viewBox="0 0 16 16"><path d="M2 9q5 5 6-1t6-5" fill="none" stroke="#a8946a" stroke-width="2"/><path d="M2 13h8" stroke="#c26060" stroke-width="1.500"/></svg><select id="side"><option>自动判断</option></select></span></div>
          <div class="row"><label for="len">短划线长度</label><input class="num" id="len" value="0.000000"></div>
        </div>
        <div class="row off"><span>添加新集</span><button type="button" class="ib small" disabled aria-label="添加新集"><svg viewBox="0 0 16 16"><path d="M5 2v6M2 5h6M11 7v7M8 10h7" stroke="#a5a5a5" stroke-width="1.700"/></svg></button></div>
        <h4>列表<svg><use href="#down"/></svg></h4>
      </section>
      <section>
        <h3>文本输入<svg><use href="#up"/></svg></h3>
        <h4>编辑文本<svg><use href="#down"/></svg></h4>
        <div class="sub fmt">
          <h4>格式设置<svg><use href="#up"/></svg></h4>
          <div class="row"><span class="combo w94"><svg><use href="#nx"/></svg><select aria-label="字体"><option>chinesef</option></select></span><span class="combo w90"><select aria-label="比例"><option>1</option></select></span></div>
          <div class="fmtbtns"><button type="button" class="lit"><b>B</b></button><button type="button"><em>I</em></button><button type="button"><u>U</u></button><button type="button" class="over">O</button><button type="button" class="sans">X<sup>2</sup></button><button type="button" class="sans">X<sub>2</sub></button></div>
        </div>
        <textarea aria-label="文本">RTJ</textarea>
        <h4>符号<svg><use href="#down"/></svg></h4>
        <h4>导入/导出<svg><use href="#down"/></svg></h4>
      </section>
      <section>
        <h3>继承<svg><use href="#up"/></svg></h3>
        <div class="row big"><span>选择注释 (0)</span><button type="button" class="ib" aria-label="选择注释"><svg viewBox="0 0 16 16"><path d="M1 6l4-5 4 5z" fill="#7158c2"/><path d="M7 6h6l2 2v6H8z" fill="#efc391" stroke="#a36831"/><path d="M1 10l5 4h4" fill="none" stroke="#444" stroke-width="1.500"/></svg></button></div>
      </section>
      <section class="last">
        <h3>设置<svg><use href="#up"/></svg></h3>
        <div class="row big"><span>设置</span><button type="button" class="ib aa" aria-label="设置"><span>A</span><b>A</b></button></div>
        <label class="row check"><input type="checkbox">竖直文本</label>
        <div class="row"><label for="ang">斜体角度</label><input class="num" id="ang" value="15.000000"></div>
        <div class="row"><label for="wid">粗体宽度</label><span class="combo w94"><select id="wid"><option>中</option></select></span></div>
        <div class="row big"><label for="al">文本对齐</label><span class="combo align"><svg viewBox="0 0 28 18"><path d="M2 13 10 5" stroke="#333"/><circle cx="3" cy="12" r="1.800" fill="#222"/><path d="M11 4h8M11 9h16M11 14h12" stroke="#333" stroke-width="2.500" stroke-dasharray="3 1"/></svg><select id="al"><option></option></select></span></div>
      </section>
    </div>
    <div class="vscroll"><svg><use href="#up"/></svg><span></span><svg><use href="#down"/></svg></div>
  </div>
  <div class="dlgfoot"><button type="button">关闭</button></div>
</form>
</body>
</html>
```
FILE: styles.css
```css
* { box-sizing: border-box; }
body {
  margin: 0;
  height: 100vh;
  display: flex;
  flex-direction: column;
  overflow: hidden;
  position: relative;
  background: #ebebeb;
  color: #333;
  font: 8px/12px "Noto Sans", "Noto Sans CJK SC", sans-serif;
}
button, input, select, textarea { font: inherit; color: inherit; margin: 0; padding: 0; border: 0; background: none; border-radius: 0; }
h1, h2, h3, h4 { margin: 0; font-weight: 400; }
i { font-style: normal; }
button { display: flex; align-items: center; justify-content: center; }
.defs { display: none; }

.titlebar { flex: none; height: 20px; display: flex; align-items: center; padding: 0 4px 0 3px; }
.nxlogo { font: bold 17px/20px "Liberation Sans", sans-serif; color: #8ba0ad; width: 31px; }
.titlebar h1 { flex: 1; font-size: 11px; line-height: 20px; }
.siemens { font-size: 10px; font-weight: 700; color: #12939a; padding-right: 14px; }
.winbtns { display: flex; gap: 1px; }
.winbtns button { width: 15px; height: 14px; }
.winbtns svg { width: 10px; height: 10px; }

.menubar { flex: none; height: 18px; display: flex; align-items: center; background: #b9ccc6; padding: 0 3px 0 5px; }
.menubar button { margin-right: 7px; }
.menubar .wide { margin-left: 6px; }
.menuicon { width: 11px; height: 11px; margin-right: 4px; }
.menubar .docbtns { margin-left: auto; gap: 0; }
.menubar .docbtns button { width: 12px; margin: 0; }
.docbtns svg { width: 9px; height: 9px; }
.docbtns .dim { opacity: .35; }

.toolbar { flex: none; height: 23px; display: flex; align-items: center; }
.grip { flex: none; width: 6px; height: 19px; background: repeating-linear-gradient(#b3b3b3 0 1px, transparent 1px 3px) 2px 0 / 1px 100% no-repeat; }
.sep { flex: none; width: 3px; height: 18px; border-left: 1px solid #dadada; }
.snaps { width: 5px; }
.b { flex: none; width: 21px; height: 20px; }
.b svg { width: 15px; height: 15px; }
.dd { flex: none; width: 8px; height: 20px; display: flex; align-items: center; justify-content: center; }
.dd::after, .caret { content: ""; border: 2px solid transparent; border-top: 3px solid #333; border-bottom: 0; }
.end { align-items: flex-end; width: 9px; padding-bottom: 2px; }
.tight .end { width: 6px; }
.launch { width: 43px; gap: 3px; }
.launch svg { width: 15px; height: 15px; }
.search { display: flex; align-items: center; width: 84px; height: 13px; border: 1px solid #b5b5b5; background: #efefef; margin: 0 3px; }
.search input { flex: 1; min-width: 0; height: 11px; }
.search svg { width: 11px; height: 11px; }
.gray { color: #b5b5b5; }
.gray svg, svg.gray { opacity: .6; }
.mid { color: #999; }

.filters { height: 21px; padding: 0 2px 0 3px; }
.filter { appearance: none; width: 89px; height: 14px; padding: 0 2px; border: 1px solid #b9b9b9; margin-right: 4px; background: linear-gradient(#333, #333) no-repeat right 4px center / 5px 1px, linear-gradient(#333, #333) no-repeat right 5px top 6px / 3px 2px; }
.scope { width: 94px; margin-right: 2px; }
.n { flex: none; width: 15px; height: 15px; }
.n svg { width: 12px; height: 12px; }
.on { background: #b5cdc4; }
.red { color: #b06161; }
.more { margin-left: auto; }

main { flex: 1; min-height: 0; display: flex; }
.rail { flex: none; width: 22px; background: #cacaca; }
.rail button { width: 22px; height: 28px; }
.rail svg { width: 16px; height: 16px; }
.rail .cog { height: 18px; margin-bottom: 10px; color: #555; }
.rail .cog svg { width: 11px; height: 11px; }
.rail .sel { background: #f0f0f0; }
.rail .gap { margin-top: 8px; }

.navigator { flex: none; width: 245px; padding: 0 6px 5px 4px; display: flex; flex-direction: column; border-top: 1px solid #b7b7b7; }
.navtitle { flex: none; height: 18px; display: flex; align-items: center; justify-content: space-between; padding: 0 4px 0 2px; }
.navtitle h2 { font-size: 8px; }
.maxi { width: 8px; height: 7px; border: 1px solid #444; border-top-width: 2px; }
.treewrap { flex: 1; min-height: 0; padding-bottom: 2px; }
.tree { table-layout: fixed; width: 100%; height: 100%; border-collapse: collapse; }
.tree th { height: 15px; padding: 0 4px; text-align: left; font-weight: 400; background: #e2e2e5; border-right: 1px solid #cfcfcf; }
.tree .c1 { width: 134px; }
.tree .c2 { width: 67px; }
.tree td { padding: 0 0 0 3px; white-space: nowrap; overflow: hidden; line-height: 10px; border-top: 1px solid #e2e2e4; }
.tree td:first-child { border-right: 1px solid #444; }
.tree td:nth-child(2) { border-right: 1px solid #dedede; }
.tree td svg { width: 11px; height: 11px; margin-right: 1px; vertical-align: -3px; }
.tree td i { display: inline-block; width: 10px; text-align: center; color: #555; }
.tree td.l1 { padding-left: 3px; background: linear-gradient(#d6d6d6, #d6d6d6) no-repeat 7px 0 / 1px 100%; }
.tree td.l2 { padding-left: 16px; background: linear-gradient(#d6d6d6, #d6d6d6) no-repeat 20px 0 / 1px 100%; }
.tree td.l3 { padding-left: 28px; background: linear-gradient(#d6d6d6, #d6d6d6) no-repeat 32px 0 / 1px 100%; }
.hot { color: #7554c4; }
.hscroll { flex: none; height: 17px; display: flex; align-items: flex-start; padding: 1px 2px 0; border-bottom: 2px solid #c4c4c4; }
.hscroll svg { width: 8px; height: 10px; }
.track { flex: 1; height: 10px; padding: 0 18%; }
.thumb { display: block; height: 100%; width: 94px; background: #c2c2c2; }
.fold { flex: none; height: 16px; justify-content: space-between; padding: 0 4px; border-bottom: 1px solid #c9c9c9; font-size: 9px; color: #3f8199; }
.fold svg { width: 7px; height: 7px; }

.viewport { flex: 1; min-width: 0; border: 1px solid #bda68d; position: relative; }
.scene { position: absolute; inset: 0; width: 100%; height: 100%; }
.axis { font: 9px "Noto Sans", sans-serif; }
.cad { font: 100 76px Roboto, "Noto Sans", sans-serif; fill: #d9a168; }

.bottom { flex: none; }
.bottom .toolbar { height: 22px; }
.status { height: 14px; display: flex; align-items: center; justify-content: space-between; padding: 0 36px 0 2px; border-top: 1px solid #cbcbcb; }
.status svg { width: 12px; height: 12px; }

.taskbar { flex: none; height: 27px; display: flex; align-items: center; background: linear-gradient(#868b67, #788962); padding: 0 10px 0 5px; color: #f0f2ea; }
.start { width: 24px; height: 27px; }
.start svg { width: 18px; height: 18px; }
.task { width: 38px; height: 25px; margin: 0 0 0 2px; }
.start + .task { margin-left: 6px; }
.task svg { width: 24px; height: 24px; }
.task.open { background: #a9af98; border: 1px solid #c3c8b5; }
.kk { background: #8c9a77; border: 1px solid #a2ab8d; }
.kk span { display: flex; align-items: flex-end; justify-content: center; width: 22px; height: 22px; border-radius: 5px; font-weight: 700; line-height: 10px; background: linear-gradient(170deg, transparent 15%, #e0743c 15% 50%, transparent 50%), #39a57c; }
.tray { margin-left: auto; display: flex; align-items: center; gap: 5px; }
.tray svg { width: 11px; height: 11px; }
.ime { width: 10px; height: 10px; margin: 0 5px 0 4px; background: #eee; color: #222; font-weight: 700; line-height: 10px; text-align: center; }
.clock { display: flex; flex-direction: column; align-items: center; }

.caption { position: absolute; left: 535px; bottom: 30px; display: flex; gap: 16px; font: 700 21px/26px "Noto Sans CJK SC", sans-serif; color: #d9141e; }
.mark { position: absolute; left: 20px; bottom: 13px; width: 80px; height: 27px; display: flex; align-items: center; gap: 1px; background: #dfe6ec; color: #2d6fc4; }
.mark svg { width: 25px; height: 26px; }
.mark b { display: block; font-size: 12px; line-height: 15px; font-weight: 900; white-space: nowrap; }
.mark small { display: block; font: bold 7px/8px "Liberation Sans", sans-serif; }

.dialog { position: absolute; top: 0; right: 162px; bottom: 27px; width: 229px; display: flex; flex-direction: column; background: #dcdcdf; }
.dlghead { flex: none; height: 16px; display: flex; align-items: center; gap: 4px; padding: 0 4px; background: #5c8780; color: #f0f4f3; }
.dlghead h2 { flex: 1; font-size: 9px; padding-left: 2px; }
.dlghead svg { width: 11px; height: 11px; }
.dlgbody { flex: 1; min-height: 0; display: flex; padding: 1px 4px 0; }
.fields { flex: 1; min-width: 0; overflow: hidden; background: #ebebeb; }
.vscroll { width: 11px; display: flex; flex-direction: column; align-items: center; background: #e3e3e3; }
.vscroll svg { width: 7px; height: 13px; }
.vscroll span { flex: 1; width: 100%; background: #9c9c9c; }
.fields section { padding: 1px 6px 5px 5px; border-bottom: 2px solid #d6d6d8; }
.fields h3 { display: flex; align-items: center; justify-content: space-between; height: 19px; margin-right: -3px; font-size: 9px; color: #3e8aa6; }
.fields h3 svg, .fields h4 svg { width: 8px; height: 7px; }
.fields h4 { display: flex; align-items: center; justify-content: space-between; height: 17px; padding: 0 3px 0 6px; font-size: 10px; color: #3e8aa6; background: #e4e4e6; border: 1px solid #dededf; }
.row { display: flex; align-items: center; justify-content: space-between; height: 18px; }
.row.big { height: 23px; }
.row.check { height: 15px; justify-content: flex-start; gap: 4px; }
.row.check input { appearance: none; width: 9px; height: 9px; border: 1px solid #999; background: #eee; }
.active { flex: 1; align-self: stretch; display: flex; align-items: center; gap: 4px; margin: 1px 0; background: #eac865; }
.active svg { width: 10px; height: 10px; }
.ib { flex: none; width: 22px; height: 22px; border: 1px solid #b4b4b4; background: #e9e9e9; }
.ib svg { width: 16px; height: 16px; }
.ib.small { width: 16px; height: 16px; margin: 0 2px; }
.off .ib.small { margin: 0; }
.ib.small svg { width: 12px; height: 12px; }
.lit, .ib.lit { background: #f0d58b; border-color: #dfc98d; }
.ib.aa { background: #dcdcee; color: #28247e; align-items: flex-start; line-height: 10px; }
.aa b { align-self: flex-end; font: italic bold 14px/15px "Liberation Serif", serif; color: #2b25c4; }
.sub { background: #e4e4e6; padding: 0 6px 3px; }
.sub h4 { margin: 0 -6px 3px; border-bottom: 0; }
.sub .row { height: 19px; }
.combo { display: flex; align-items: center; position: relative; height: 17px; border: 1px solid #b4b4b4; background: #e9e9e9; padding: 0 2px; gap: 2px; }
.combo::after { content: ""; position: absolute; right: 3px; top: 6px; border: 2px solid transparent; border-top: 3px solid #222; border-bottom: 0; pointer-events: none; }
.combo svg { flex: none; width: 12px; height: 12px; }
.combo select { flex: 1; min-width: 0; height: 15px; appearance: none; }
.w94 { width: 94px; }
.w90 { width: 91px; }
.num { width: 55px; height: 16px; padding-left: 8px; border: 1px solid #b4b4b4; background: #e9e9e9; font: 10px/14px "Liberation Mono", monospace; }
.sub .num { padding-left: 14px; }
.off { color: #a9a9a9; }
.sub.fmt { padding-bottom: 6px; }
.fmtbtns { display: flex; gap: 2px; margin-top: 1px; }
.fmtbtns button { width: 22px; height: 22px; border: 1px solid #b9b9b9; font: bold 12px/14px "Liberation Serif", serif; color: #222; }
.fmtbtns em { font-weight: 400; }
.fmtbtns .over { text-decoration: overline; font-family: "Noto Sans", sans-serif; font-size: 10px; font-weight: 400; }
.fmtbtns .sans { font-family: "Noto Sans", sans-serif; font-weight: 500; }
.fmtbtns sup, .fmtbtns sub { font-size: 8px; line-height: 10px; }
.fmtbtns sup { align-self: flex-start; }
.fmtbtns sub { align-self: flex-end; }
.fields textarea { display: block; width: 100%; height: 70px; padding: 0 2px; border: 1px solid #b4b4b4; resize: none; background: #e9e9e9; }
.combo.align { width: 46px; height: 20px; }
.combo.align::after { top: 8px; }
.combo.align svg { width: 28px; height: 18px; }
.dlgfoot { flex: none; height: 29px; display: flex; justify-content: flex-end; align-items: center; padding: 0 10px 2px; }
.dlgfoot button { width: 36px; height: 17px; background: #94c5d7; border: 1px solid #7fb0c3; }
```
